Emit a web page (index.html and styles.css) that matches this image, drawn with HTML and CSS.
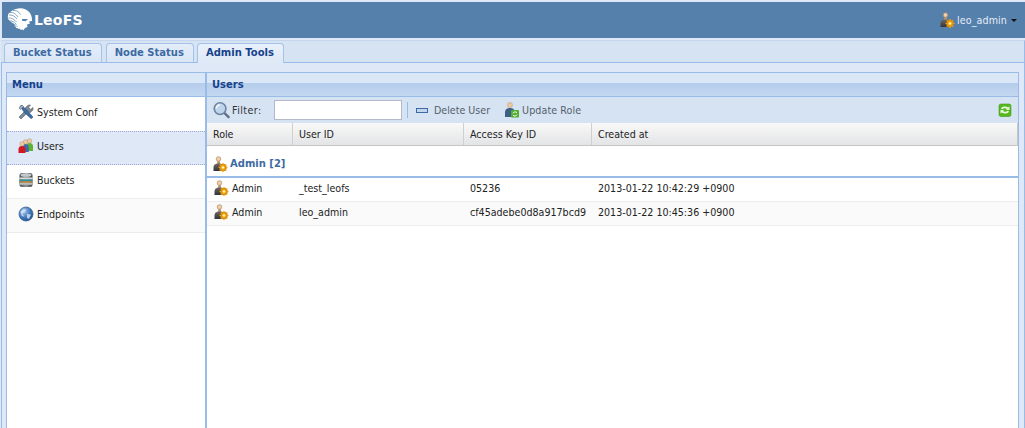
FILE: index.html
```html
<!DOCTYPE html>
<html lang="en">
<head>
<meta charset="utf-8">
<title>LeoFS</title>
<link rel="stylesheet" href="styles.css">
</head>
<body>
<svg class="defs" width="0" height="0" aria-hidden="true">
  <defs>
    <radialGradient id="gear" cx=".5" cy=".5" r=".5"><stop offset="0" stop-color="#fff3a0"/><stop offset=".6" stop-color="#f5b21e"/><stop offset="1" stop-color="#d98a0c"/></radialGradient>
    <linearGradient id="body" x1="0" y1="0" x2="0" y2="1"><stop offset="0" stop-color="#6f6a64"/><stop offset="1" stop-color="#333336"/></linearGradient>
    <linearGradient id="dbbody" x1="0" y1="0" x2="1" y2="0"><stop offset="0" stop-color="#4c5054"/><stop offset=".5" stop-color="#8d9194"/><stop offset="1" stop-color="#3f4347"/></linearGradient>
    <symbol id="i-admin" viewBox="0 0 16 16">
      <circle cx="6.500" cy="3" r="2.300" fill="#f0cfa8" stroke="#a8805a" stroke-width=".6"/>
      <path d="M5.500 5h2.200l.6 3h-3.400z" fill="#b8946e"/>
      <path d="M1.500 15v-3.500C1.500 9 3 7.500 6.500 7.500s4.500 1.500 4.500 4V15z" fill="url(#body)"/>
      <circle cx="11" cy="11.500" r="3.800" fill="#d98a0c"/>
      <path d="M11 7v9M6.500 11.500h9M7.800 8.300l6.400 6.400M14.200 8.300l-6.400 6.400" stroke="#eda215" stroke-width="1.200"/>
      <circle cx="11" cy="11.500" r="2.700" fill="url(#gear)"/>
      <circle cx="11" cy="11.500" r="1" fill="#fff8c8"/>
    </symbol>
    <symbol id="i-wrench" viewBox="0 0 16 16">
      <path d="M3 15l-2-2 7-7-.6-2.200L10 1.200l2.500-.2-2 2.200L12.700 5.500l2.300-2-.1 2.500-2.700 2.600L10 8z" fill="#7e8a96" stroke="#4c5661" stroke-width=".6"/>
      <path d="M2 2.500L3.500 1l5 5 6 6.500c.6 1-.8 2.400-1.800 1.800L6.500 8.500z" fill="#3a6ea8" stroke="#23476e" stroke-width=".6"/>
      <path d="M1 4l3-3 1.500 1.500-3 3z" fill="#a9b2bb" stroke="#596470" stroke-width=".5"/>
    </symbol>
    <symbol id="i-users" viewBox="0 0 16 16">
      <circle cx="11.500" cy="3" r="2.300" fill="#eccaa4" stroke="#a8805a" stroke-width=".4"/>
      <path d="M8.500 13V8c0-2 1.200-3 3-3s3.500 1 3.500 3v5z" fill="#5cb531"/>
      <circle cx="7.500" cy="4" r="2.300" fill="#eccaa4" stroke="#a8805a" stroke-width=".4"/>
      <path d="M4.500 14V9c0-2 1.300-3 3-3s3.300 1 3.300 3v5z" fill="#3f69ad"/>
      <circle cx="4" cy="6" r="2.300" fill="#eccaa4" stroke="#a8805a" stroke-width=".4"/>
      <path d="M.5 15v-4c0-2 1.500-3 3.500-3s3.500 1 3.500 3v4z" fill="#cf1a1f"/>
    </symbol>
    <symbol id="i-db" viewBox="0 0 16 16">
      <rect x="1.500" y="1" width="13" height="14" rx="2.500" fill="url(#dbbody)"/>
      <ellipse cx="8" cy="3" rx="5.500" ry="1.800" fill="#c5c8ca"/>
      <rect x="1.500" y="5.500" width="13" height="2" fill="#d7d9da"/>
      <rect x="1.500" y="7.500" width="13" height="1.800" fill="#2f8f9f"/>
      <rect x="1.500" y="9.300" width="13" height="1.500" fill="#c8892e"/>
      <rect x="1.500" y="10.800" width="13" height="2" fill="#b9bcbe"/>
    </symbol>
    <radialGradient id="globe" cx=".35" cy=".3" r=".8"><stop offset="0" stop-color="#a9c9ee"/><stop offset=".6" stop-color="#3f75b8"/><stop offset="1" stop-color="#1d4a85"/></radialGradient>
    <symbol id="i-globe" viewBox="0 0 16 16">
      <circle cx="8" cy="8" r="7" fill="url(#globe)" stroke="#2a5387" stroke-width=".7"/>
      <path d="M2.500 6C4 3.500 6 3 8 3.500L7 6 4.500 7.500 6 10.500 4 10zM9 8l4 .5L11 13l-2-1z" fill="#d9e6f5" opacity=".8"/>
    </symbol>
    <symbol id="i-search" viewBox="0 0 18 18">
      <path d="M12 12l4.500 4.500" stroke="#5f6f86" stroke-width="2.400" stroke-linecap="round"/>
      <circle cx="7.500" cy="7.500" r="6.200" fill="#bfd5ec" stroke="#6c82a0" stroke-width="1.700"/>
      <path d="M3.500 7.500a4 4 0 0 1 4-4" fill="none" stroke="#fff" stroke-width="1.300"/>
    </symbol>
    <symbol id="i-update" viewBox="0 0 16 16">
      <circle cx="6" cy="3" r="2.500" fill="#eccaa4" stroke="#a8805a" stroke-width=".4"/>
      <path d="M1 15v-5c0-2.500 2-4 5-4s4 1 4.500 3v6z" fill="#3d5f86"/>
      <rect x="7" y="8" width="8" height="7.500" rx="1" fill="#4fae2e"/>
      <path d="M9 11.500a2.300 2.300 0 0 1 4-.8M13 12.500a2.300 2.300 0 0 1-4 .6" fill="none" stroke="#fff" stroke-width="1"/>
    </symbol>
    <symbol id="i-refresh" viewBox="0 0 14 16">
      <rect x="1" y="2" width="12" height="12.500" rx="2" fill="#57b91f" stroke="#3f9a14" stroke-width=".6"/>
      <path d="M3 6.800A4 3 0 0 1 10 5.500L11.500 4.500V8H8l1-1A2.700 2 0 0 0 4.500 7.300z" fill="#eaf7e0"/>
      <path d="M11 9.200A4 3 0 0 1 4 10.500L2.500 11.500V8H6L5 9A2.700 2 0 0 0 9.500 8.700z" fill="#eaf7e0"/>
    </symbol>
  </defs>
</svg>

<header class="topbar">
  <div class="brand">
    <svg class="lion" viewBox="0 0 26 24" aria-hidden="true">
      <path d="M9 1c5-2 11 0 14 4 2 3 2 6 2 8l-3 .5 1 2-3 1 .5 2.500c-2 .5-3 1-4 3.500-.5-1.500-2-1-3-.5 0-1.500-1-1.500-2-1-.3-1-1.500-1-2.500-1 .4-1-.6-1.500-1.500-2 .6-.7 0-1.500-1-2.500C.5 12 .5 10 1 8c-.2-2 1-3 2-3.500C4 3 6.500 1.500 9 1z" fill="#fff"/>
      <path d="M2 7c3 0 6 1 8 4M3 4.500c3-.5 6 1.500 8 4.500M1.500 10c3-.5 6 1.500 8 4M2.500 13c2.500-.5 5 1 7 3.500M5 16.500c2-.5 4 .5 5.500 2.500M6 2.500c3-.5 6 1 7.500 4" fill="none" stroke="#5680ac" stroke-width=".7"/>
      <path d="M15 11l6 0-2.500 2.200-3.500-.5z" fill="#5680ac"/>
    </svg>
    <span class="brand-name">LeoFS</span>
  </div>
  <div class="account">
    <svg class="icon"><use href="#i-admin"/></svg>
    <span class="account-name">leo_admin</span>
    <span class="caret"></span>
  </div>
</header>

<nav class="tabbar">
  <a class="tab">Bucket Status</a>
  <a class="tab">Node Status</a>
  <a class="tab tab-active">Admin Tools</a>
</nav>

<main class="workspace">
  <aside class="menu">
    <h2 class="panel-title">Menu</h2>
    <ul class="menu-list">
      <li class="menu-item"><svg class="icon"><use href="#i-wrench"/></svg>System Conf</li>
      <li class="menu-item menu-selected"><svg class="icon"><use href="#i-users"/></svg>Users</li>
      <li class="menu-item"><svg class="icon"><use href="#i-db"/></svg>Buckets</li>
      <li class="menu-item"><svg class="icon"><use href="#i-globe"/></svg>Endpoints</li>
    </ul>
  </aside>
  <section class="content">
    <h2 class="panel-title">Users</h2>
    <div class="toolbar">
      <svg class="icon-search"><use href="#i-search"/></svg>
      <label class="filter-label" for="filter">Filter:</label>
      <input class="filter" id="filter" type="text">
      <span class="tool-sep"></span>
      <span class="tool"><span class="minus"></span>Delete User</span>
      <span class="tool"><svg class="icon"><use href="#i-update"/></svg>Update Role</span>
      <svg class="icon-refresh"><use href="#i-refresh"/></svg>
    </div>
    <div class="grid-head row">
      <div class="c1">Role</div><div class="c2">User ID</div><div class="c3">Access Key ID</div><div class="c4">Created at</div>
    </div>
    <div class="group"><svg class="icon"><use href="#i-admin"/></svg>Admin [2]</div>
    <div class="grid-row row">
      <div class="c1"><svg class="icon"><use href="#i-admin"/></svg>Admin</div><div class="c2">_test_leofs</div><div class="c3">05236</div><div class="c4">2013-01-22 10:42:29 +0900</div>
    </div>
    <div class="grid-row row alt">
      <div class="c1"><svg class="icon"><use href="#i-admin"/></svg>Admin</div><div class="c2">leo_admin</div><div class="c3">cf45adebe0d8a917bcd9</div><div class="c4">2013-01-22 10:45:36 +0900</div>
    </div>
  </section>
</main>
</body>
</html>
```

FILE: styles.css
```css
* { box-sizing: border-box; }
html, body { height: 100%; }
body {
  margin: 0;
  height: 428px;
  overflow: hidden;
  display: flex;
  flex-direction: column;
  background: #dfe8f6;
  font: 10.6px/14px "DejaVu Sans Condensed", "DejaVu Sans", sans-serif;
  font-stretch: condensed;
  color: #222;
}
.defs { position: absolute; }
.icon { width: 16px; height: 16px; flex: none; display: block; }

.topbar {
  flex: none;
  height: 36px;
  margin: 2px 0 0 2px;
  padding: 0 8px 0 5px;
  background: #5680ac;
  display: flex;
  align-items: center;
  justify-content: space-between;
}
.brand { display: flex; align-items: center; gap: 1px; }
.lion { width: 26px; height: 24px; display: block; }
.brand-name { font: bold 14px/20px "DejaVu Sans", sans-serif; color: #fff; letter-spacing: .2px; }
.account { display: flex; align-items: center; color: #e4ecf6; }
.account-name { margin-left: 2px; letter-spacing: .1px; }
.caret {
  margin-left: 4px;
  border: 3px solid transparent;
  border-top: 3px solid #111;
  border-bottom: 0;
}

.tabbar {
  flex: none;
  height: 23px;
  margin: 2px 0 0 1px;
  padding: 2px 0 0 3px;
  display: flex;
  gap: 4px;
  background: #d6e3f3;
  border-top: 1px solid #c5d7ee;
  border-right: 1px solid #99bbe8;
  border-bottom: 1px solid #99bbe8;
}
.tab {
  height: 19px;
  padding: 0 9px 0 8px;
  font: bold 10px/18px "DejaVu Sans", sans-serif;
  color: #3d6aa3;
  background: linear-gradient(#e4edf9, #dbe6f6);
  border: 1px solid #a6c2e8;
  border-bottom: 0;
  border-radius: 4px 4px 0 0;
}
.tab-active {
  height: 20px;
  margin-left: -1px;
  color: #15428b;
  background: linear-gradient(#e8f0fb, #dfe8f6);
  position: relative;
  z-index: 1;
}

.workspace {
  flex: 1;
  min-height: 0;
  margin: 0 0 0 1px;
  padding: 9px 5px 0 4px;
  display: flex;
  border-left: 1px solid #99bbe8;
  border-right: 1px solid #99bbe8;
}
.panel-title {
  margin: 0;
  height: 25px;
  padding-left: 5px;
  font: bold 10px/23px "DejaVu Sans", sans-serif;
  color: #15428b;
  background: linear-gradient(#dae7f6 0, #dae7f6 45%, #b5cdec 45%, #c3d7f0 100%);
  border-top: 1px solid #99bbe8;
  border-bottom: 1px solid #99bbe8;
}
.menu {
  flex: none;
  width: 199px;
  background: #fff;
  border-left: 1px solid #99bbe8;
}
.menu-list { margin: 0; padding: 0; list-style: none; }
.menu-item {
  height: 34px;
  padding: 0 0 3px 11px;
  display: flex;
  align-items: center;
  gap: 3px;
  border-bottom: 1px solid #ededed;
}
.menu-item:nth-child(4) { background: #fafafa; }
.menu-item:nth-child(1) { padding-bottom: 5px; border-bottom: 0; }
.menu-selected { padding-bottom: 5px; background: #dfe8f6; border-top: 1px dotted #99a8d8; border-bottom: 1px dotted #99a8d8; }

.content {
  flex: 1;
  min-width: 0;
  background: #fff;
  border-left: 2px solid #99bbe8;
  border-right: 1px solid #99bbe8;
}
.toolbar {
  height: 26px;
  padding: 0 6px;
  display: flex;
  align-items: center;
  background: #d6e3f3;
  color: #333;
}
.icon-search { width: 17px; height: 18px; flex: none; }
.filter-label { width: 42px; margin-left: 2px; letter-spacing: .45px; }
.filter {
  width: 128px;
  height: 20px;
  margin: 0;
  padding: 0;
  background: #fff;
  border: 1px solid #b5b8c8;
}
.tool-sep { width: 1px; height: 16px; margin: 0 8px 0 5px; background: #99bbe8; }
.tool { display: flex; align-items: center; color: #555f6b; }
.tool + .tool { margin-left: 14px; gap: 2px; letter-spacing: .1px; }
.minus { width: 12px; height: 5px; margin-right: 6px; background: #c4d6ee; border: 1px solid #3d6aa3; }
.icon-refresh { width: 14px; height: 16px; margin-left: auto; }

.row { display: flex; }
.row > div { padding-left: 6px; display: flex; align-items: center; }
.c1 { width: 86px; gap: 3px; }
.c2 { width: 171px; }
.c3 { width: 128px; }
.c4 { flex: 1; }
.grid-head {
  height: 23px;
  background: linear-gradient(#f9f9f9, #e3e4e6);
  border-bottom: 1px solid #c5c5c5;
  border-right: 1px solid #c5c5c5;
}
.grid-head > div { border-right: 1px solid #d0d0d0; }
.grid-head > .c4 { border-right: 0; }
.group {
  height: 32px;
  padding: 5px 0 0 5px;
  display: flex;
  align-items: center;
  gap: 2px;
  font: bold 10px/14px "DejaVu Sans", sans-serif;
  color: #3d6aa3;
  border-bottom: 2px solid #99bbe8;
}
.grid-row { height: 24px; border-bottom: 1px solid #ededed; }
.grid-row > div { padding-bottom: 4px; }
.alt { background: #fafafa; }
```
